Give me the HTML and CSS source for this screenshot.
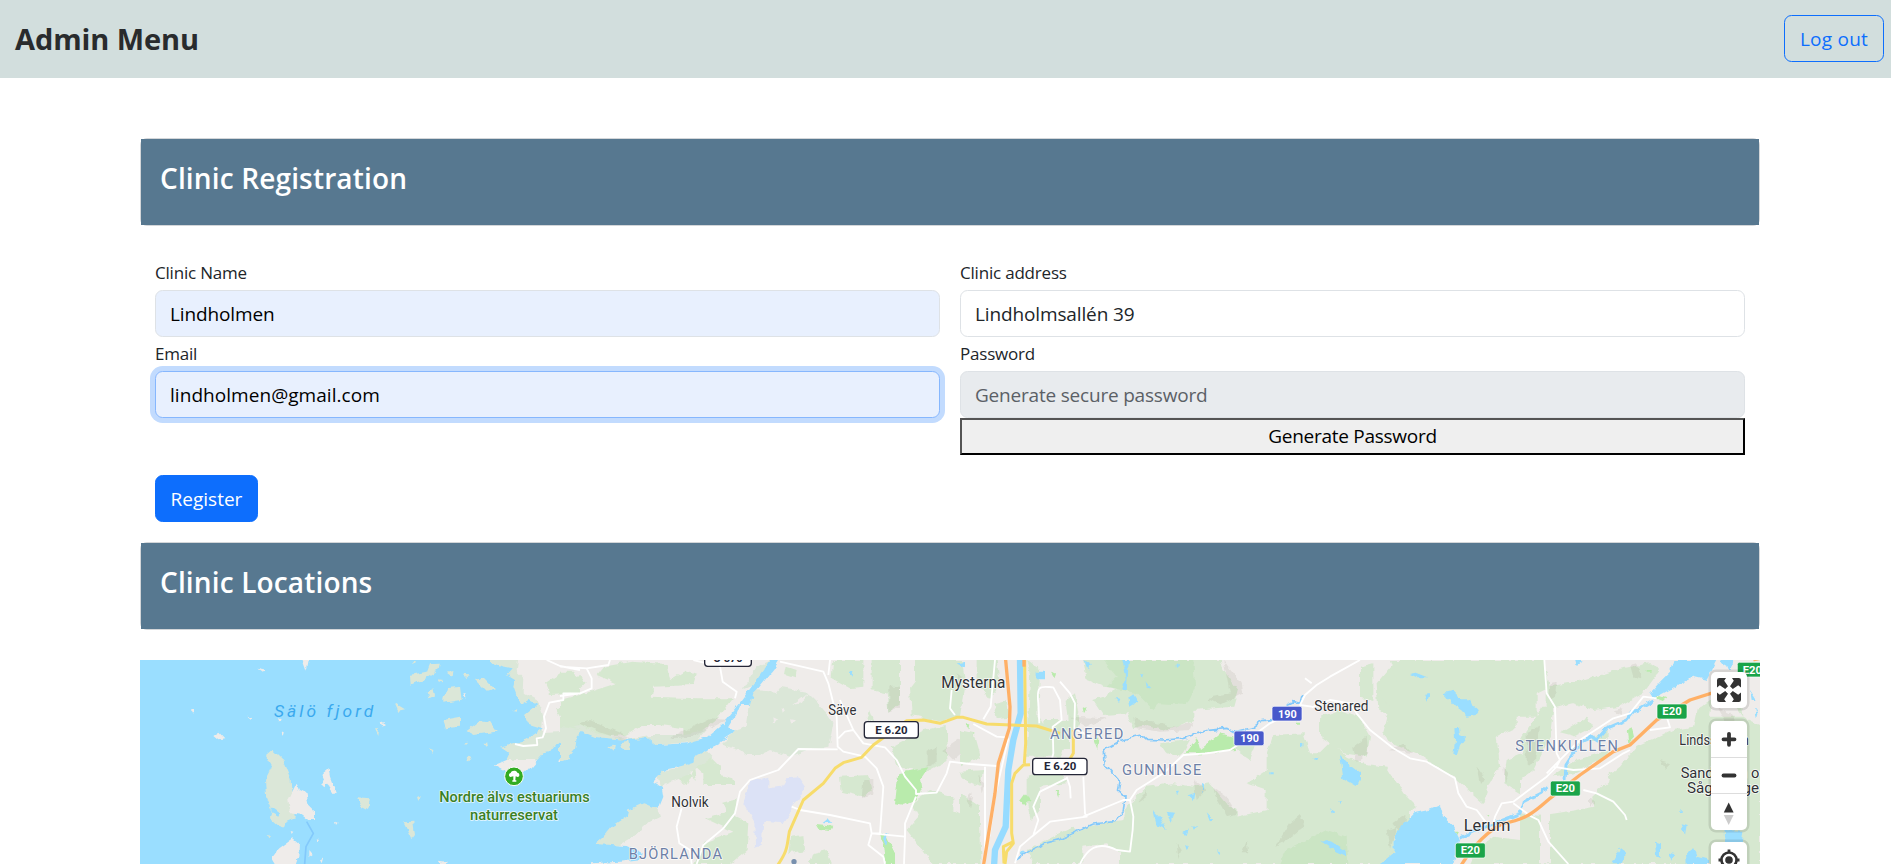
FILE: index.html
```html
<!DOCTYPE html>
<html lang="en">
<head>
<meta charset="utf-8">
<title>Admin Menu</title>
<link rel="stylesheet" href="styles.css">
</head>
<body>
<nav class="navbar">
  <h1 class="brand">Admin Menu</h1>
  <button class="btn btn-outline" type="button">Log out</button>
</nav>
<main class="content">
  <section class="card"><h2 class="card-title">Clinic Registration</h2></section>
  <form class="form">
    <div class="fields">
      <div class="field">
        <label class="label" for="name">Clinic Name</label>
        <input class="input filled name" id="name" value="Lindholmen">
      </div>
      <div class="field">
        <label class="label" for="address">Clinic address</label>
        <input class="input address" id="address" value="Lindholmsallén 39">
      </div>
      <div class="field">
        <label class="label" for="email">Email</label>
        <input class="input filled focused email" id="email" value="lindholmen@gmail.com">
      </div>
      <div class="field">
        <label class="label" for="password">Password</label>
        <input class="input disabled" id="password" placeholder="Generate secure password" disabled>
        <button class="generate" type="button">Generate Password</button>
      </div>
    </div>
    <button class="btn btn-primary" type="button">Register</button>
  </form>
  <section class="card"><h2 class="card-title locations">Clinic Locations</h2></section>
  <div class="map">
    <svg class="map-canvas" width="1620" height="204" viewBox="30 30 4860 612">
      <defs>
        <filter id="rough" filterUnits="userSpaceOnUse" x="0" y="0" width="4920" height="680" color-interpolation-filters="sRGB">
          <feTurbulence type="fractalNoise" baseFrequency="0.045" numOctaves="2" seed="4"/>
          <feDisplacementMap in="SourceGraphic" scale="17" xChannelSelector="R" yChannelSelector="G"/>
        </filter>
      </defs>
      <rect width="4920" height="680" fill="#efecea"/>
      <g filter="url(#rough)">
        <!-- Archipelago and western coast -->
        <g>
          <path class="reserve" d="M1060 20H1165L1160 60 1180 80 1178 125 1225 150 1240 200 1235 250 1300 245 1400 190V330H1080V20Z"/>
          <path class="water" d="M-30 0H1070L1085 40 1115 52 1145 58 1130 75 1155 90 1150 110 1170 165 1195 150 1222 165 1185 195 1190 220 1238 235 1180 272 1110 290 1140 310 1130 330 1095 345 1130 365 1190 365 1240 310 1262 305 1285 275 1305 280 1285 335 1300 342 1335 310 1345 255 1370 245V680H-30Z"/>
          <path class="reserve" d="M840 75 890 65 900 40 930 38 925 60 880 90 842 107ZM940 145 950 115 990 110 995 150 940 158ZM890 125 910 115 915 135 895 145ZM1035 90 1060 82 1095 118 1070 125ZM937 210 990 200 990 230 945 235ZM1010 240 1050 210 1080 215 1100 245 1030 255ZM795 160 825 178 805 182ZM735 235 747 235 745 255ZM897 295 910 300 908 312ZM1140 185 1165 178 1160 188ZM1060 278 1080 278 1070 290ZM950 65 970 60 968 78ZM995 74 1020 76 1005 84ZM925 88 940 90 930 96ZM1000 280 1015 278 1005 288ZM860 438 873 443 865 452ZM410 552 420 555 415 562ZM848 32 858 34 852 46ZM1010 320 1025 322 1015 338ZM682 442 720 445 715 478 690 465ZM820 517 850 515 855 555 845 568ZM405 315 425 297 460 330 485 390 490 470 495 505 470 515 465 530 440 522 420 505 425 480 408 440 405 390 425 350Z"/>
          <path class="land" d="M382 50 405 55 405 67ZM517 25H537L530 62ZM250 255 265 245 283 265 265 268ZM575 370 595 353 600 380 617 425 610 432 590 405 583 415 573 405 585 392ZM475 450 500 398 510 420 530 430 535 465 555 485 555 510 535 510 515 495 480 490ZM425 625 445 598 490 565 507 580 505 620 495 650H440ZM925 632 950 635 945 650ZM187 180H195V190H187ZM440 200 452 205 447 215ZM455 240 462 245 457 262ZM352 200 372 205 362 209ZM535 600 545 612 535 620ZM1000 130 1010 130 1008 150ZM550 620 560 625ZM570 630 580 622 575 640ZM482 543 490 545 485 552ZM560 565 570 568 565 574ZM615 512 623 515 618 522ZM750 215 765 225 758 230Z"/>
          <path class="water" d="M425 472 450 490 445 500 425 490Z"/>
          <path class="woods" d="M1245 100 1290 70 1310 95 1350 75V130L1260 135ZM1275 175 1350 160V210L1290 200Z"/>
        </g>
        <!-- Säve, Nolvik and the north arm of the river -->
        <g transform="translate(1290)">
          <path class="woods" d="M130 50 215 35 320 42 330 90 375 62 410 75 400 105 280 110 275 140 410 145 520 145 470 210 420 250 370 260 370 235 300 225 250 225 200 255 120 260 60 225 0 240V150L90 125 170 100 110 75ZM0 65 40 65 80 95 50 125 0 120ZM30 225 60 240 50 290 20 330 0 335V240ZM680 50 710 60 705 85 675 75ZM820 30 910 30 910 110 870 115 815 85ZM935 30 1020 30V160L985 185 980 130 935 120ZM1065 30 1205 30 1215 90 1200 200 1145 215 1055 195 1050 110 1065 90ZM1250 30 1310 30 1320 105 1290 150 1250 100ZM995 290 1090 240 1160 225 1165 330 1100 365 1010 350ZM840 380 925 375 935 420 910 440 845 425ZM1055 460 1110 420 1180 440 1180 480 1260 520 1265 642H1120L1040 540 1075 500ZM1200 365 1270 360 1260 410 1205 385ZM395 340 440 310 480 350 480 375 520 385 525 405 430 405 430 370ZM435 505 500 485 490 455 530 445 525 500 565 520 560 600 510 642H400L430 580 520 545ZM690 560 730 555 735 600 685 610ZM760 610 800 600 815 642H750ZM1225 500 1260 520 1250 560ZM405 345 390 370 410 390ZM350 385 400 365 380 405ZM920 200 930 180 945 220Z"/>
          <path class="reserve" d="M0 230 60 240 200 268 270 255 360 255 440 240 410 275 290 285 190 285 100 270 45 300 15 340H0ZM580 120 650 125 660 110 740 125 770 155 800 190 820 220 805 290 740 300 690 320 630 300 600 315 560 315 540 300 490 285 500 265 530 240 560 230 570 160ZM290 365 350 355 400 320 440 300 460 320 380 375 300 410ZM545 120 590 50 635 30 600 100ZM105 580 155 530 200 485 240 455 290 470 300 500 270 515 220 560 180 585 110 595Z"/>
          <path class="land" d="M640 205 655 212 642 220ZM665 175 675 180 668 188ZM700 165 745 130 725 160ZM690 205 705 208 693 218Z"/>
          <path class="water" d="M-30 350 18 330 45 300 50 260 65 243 110 262 200 270 260 262 290 285 380 280 440 262 490 220 545 150 590 90 640 20H665L640 60 615 90 595 115 580 130 570 165 540 165 530 190 505 230 525 245 495 265 480 280 440 300 405 320 400 335 350 352 310 360 280 395 305 410 310 440 295 478 250 460 205 480 200 500 155 530 130 560 105 582 200 588 245 610 240 628 180 635 90 640V680H-30Z"/>
          <path class="reserve" d="M145 292 165 285 160 302ZM182 280 205 275 210 300 190 300Z"/>
          <path class="airport" d="M570 395 625 380 625 415 665 410 680 385 715 382 735 410 715 450 695 470 690 490 670 520 610 515 605 585 585 590 583 515 550 460Z"/>
          <path class="park" d="M1015 370 1060 360 1105 352 1080 390 1085 420 1065 450 1030 465 1005 460ZM960 550 980 560 1005 610 1005 642H975L970 590ZM768 525 820 530 815 540 775 537ZM1212 220 1228 220 1225 235ZM1225 250 1243 250 1240 275 1228 275ZM1237 315H1245V326H1237Z"/>
          <path class="water" d="M787 520 805 505 817 518ZM973 550 982 550 980 590 973 575ZM868 65 880 60 878 80ZM1190 40 1215 35 1215 55Z"/>
          <path class="relief" d="M55 220 90 210 210 260 190 270 100 240ZM330 265 450 205 500 210 400 260ZM985 110H1020V170L985 185ZM1100 305 1130 290V335L1100 350ZM1150 300 1210 260 1215 300 1180 330ZM910 390 940 390V430L905 445ZM1255 375 1275 400 1265 430ZM1215 450 1235 430 1225 480ZM1190 70 1205 80 1200 110ZM1200 560 1220 550 1210 590Z"/>
        </g>
        <!-- Angered, Gunnilse and the hills -->
        <g transform="translate(2490)">
          <path class="woods" d="M370 30 800 30 845 80 820 170 700 180 700 210 620 240 560 225 520 235 500 190 430 195 400 150 430 140 475 115 430 110 380 90ZM100 160 140 150 150 200 110 205ZM200 30 240 60 235 200 270 260 330 250 320 150 345 130 360 220 300 320 200 320 205 210 210 80ZM0 240 40 250 60 320 0 350ZM0 430 60 470 60 642H0ZM200 380 300 355 320 400 240 410 240 480 215 510 200 440ZM1300 40 1350 30V210L1255 180 1250 100ZM1080 200 1140 180 1195 200 1230 260 1220 320 1150 310 1080 260ZM500 470 560 410 640 400 700 410 750 400 800 460 830 480 830 500 920 480 920 420 860 400 920 360 920 310 940 255 1030 250 1050 310 1080 310 1110 280 1160 320 1250 360 1280 400 1320 430 1350 470V520L1300 560 1300 642H210L380 530 490 510ZM200 600 240 580 340 530 380 580 360 642H220ZM250 210 330 210 330 300 250 300ZM790 260 900 250 870 330 840 310ZM600 280 690 270 660 320 620 310Z"/>
          <path class="woods-deep" d="M430 30H700L705 110 680 165 600 160 580 180 530 130 440 110 470 80ZM980 600 1100 540 1160 560 1165 642H960Z"/>
          <path class="land" d="M370 590 440 580 480 610 480 642H370ZM780 20H1200V30L1040 150 960 160 850 140 790 60Z"/>
          <path class="park" d="M675 310 710 265 720 300 780 250 820 260 825 300 740 310ZM180 450 195 430 212 450 195 468ZM287 420 297 420 295 440ZM400 270 415 265 412 300ZM368 170 380 175 372 190ZM270 65 285 70 280 82ZM1005 218H1020V224H1005Z"/>
          <path class="water" d="M505 140 520 130 535 155 510 170ZM487 30H507L500 120H485L500 85ZM370 30 395 45 390 65ZM540 70 550 70 545 80ZM557 95 573 115 560 110ZM467 145 482 145 477 156ZM230 65H255V88H230ZM580 480 600 500 620 540 590 525ZM620 485 645 488 635 515ZM740 490 760 510 750 515ZM670 550 687 535 680 555ZM683 433 706 425 702 450ZM722 395 730 400 728 435ZM650 425 660 425 655 435ZM1140 315 1175 350 1207 375 1190 408 1150 385ZM1080 572 1110 570 1155 600 1160 618 1130 605ZM1060 322 1072 325 1070 333ZM1020 282H1030V292H1020ZM928 367H938V373H928ZM1110 478 1125 487 1115 490ZM1135 453 1147 455 1140 462ZM675 582 687 588 680 597ZM768 600 778 605 775 612ZM180 605 195 605 185 620ZM1340 520 1380 510V642H1260L1300 610 1300 570ZM650 40 658 45 650 52ZM700 525 712 530 704 536Z"/>
          <path class="relief" d="M790 30 845 100 850 130 780 165 740 145 810 130ZM520 205 640 230 700 215 690 240 600 245 530 235ZM330 200 440 205 380 230ZM760 410 800 440 830 490 800 500 770 450ZM1250 370 1320 420 1290 470 1340 490 1330 560 1300 520 1280 430ZM990 520 1020 495 1035 530 980 570 945 590ZM530 460 560 420 560 440ZM1180 290 1220 260 1225 310 1190 340ZM700 390 740 420 710 450ZM20 450 40 440 30 475ZM650 580 665 600 655 630ZM845 610 860 570 865 610Z"/>
        </g>
        <!-- Stenkullen and Lerum -->
        <g transform="translate(3690)">
          <path class="woods" d="M90 30 550 30 570 110 530 130 530 200 470 200 470 230 410 260 420 350 390 400 370 460 280 380 200 330 170 310 90 280 70 250 90 170 50 130 110 90ZM650 95 760 60 870 40 900 60 850 130 780 170 700 180 640 160 560 180 560 110ZM600 250 680 200 700 230 640 260ZM480 270 550 170 580 170 570 260 520 360 480 390 480 430 430 400 440 330 490 310ZM1010 180 1170 60 1200 60V642H610L520 500 650 480 700 470 690 420 780 350 830 290 900 260 940 240 1000 230ZM0 340 80 350 130 430 170 470 100 520 100 600 60 642H0ZM330 642 350 600 400 560 480 570 480 490 560 500 620 642ZM690 270 740 240 740 270ZM0 50 40 40 40 150 0 140ZM575 380 650 330 750 300 720 330 640 370Z"/>
          <path class="land" d="M690 360 740 355 750 390 690 440 660 425ZM1175 20H1210V230L1150 200 1140 90ZM540 490 570 480 570 640 540 640ZM1065 100 1090 120 1150 200 1050 200Z"/>
          <path class="water" d="M160 490 205 480 240 465 250 500 280 530 300 570 280 642H60L100 620 105 550ZM250 130 280 122 300 145 330 145 340 170 360 180 350 195 320 200 300 180 285 170ZM283 232 300 230 303 255 318 262 300 285 290 318 280 310 285 270ZM150 72 170 68 205 82 170 82ZM193 135 210 132 200 155ZM645 30 665 38 650 48ZM940 30H1070L1040 90 1000 80 960 100 925 120 880 145 870 130 900 95 930 65ZM1080 20 1120 30 1115 60 1090 45ZM885 575 900 580 900 620 888 615ZM925 608 945 612 935 635ZM978 610 1000 595 1010 620 1050 630 1050 642H980ZM780 595 795 605 790 640H755ZM962 520 980 525 975 555ZM1090 540 1150 542 1145 580 1130 590 1125 610 1095 580ZM1170 120 1190 150 1175 150ZM1185 170 1195 190 1190 205ZM958 478H968V486H958Z"/>
          <path class="park" d="M800 240 815 232 822 260 805 278ZM890 135 920 145 900 155ZM287 545 300 545 295 555ZM380 492 390 492 385 500ZM860 60H875V65H860ZM395 455 403 460ZM765 128 777 130Z"/>
          <path class="relief" d="M570 100 590 95 585 140 570 150ZM500 250 540 230 525 330 500 350ZM90 300 130 280 160 310ZM80 540 110 530 90 600ZM1070 170 1110 190 1140 240 1100 220ZM810 45 830 40 845 85 820 80ZM430 350 445 370 435 400ZM690 440 705 455 690 470ZM350 350 375 385 360 405ZM760 180 790 175 785 195ZM900 330 930 340 915 355Z"/>
        </g>
      </g>
      <g class="streams">
        <path d="M530 515 550 550 528 590 524 642"/>
        <g filter="url(#rough)">
          <path d="M2660 628 2700 602 2745 580 2790 568 2850 540 2890 522 2955 515 2980 485 2985 440 2965 420 2970 395 2925 345 2923 300 2975 270 3035 255 3050 268 3100 270 3160 265 3230 242 3290 235 3310 246 3370 232 3395 212 3430 208M3470 165 3490 155 3510 160 3515 140 3525 133"/>
          <path class="creek" d="M3990 565 4030 545 4120 510 4170 490 4180 455 4230 430 4255 408M4305 390 4308 345 4330 310 4360 270 4385 260 4400 270 4430 235 4490 210 4510 185 4570 150"/>
        </g>
      </g>
      <path class="river" d="M2670 25 2672 190 2650 270 2635 360 2627 530 2595 600 2592 650"/>
      <g class="roads">
        <path d="M1250 30 1290 48 1350 60M1350 130 1300 130 1300 150 1258 158 1242 200 1248 235 1238 262 1220 265 1222 285 1180 288 1155 282M1290 50 1370 55 1385 85 1385 115 1350 130 1290 138M1370 55 1435 45 1440 30M1690 30 1770 50 1778 95 1820 125 1815 145"/>
        <path d="M1950 35 2080 65 2095 100 2120 200 2123 290 2140 305 2205 320M2095 75 2100 30M2130 150 2170 240 2200 280 2265 292 2300 330 2325 380 2358 420 2358 432 2420 428 2450 370 2460 335 2520 342 2600 348M2170 240 2145 245 2125 265M2123 298 2005 297 1945 360 1860 390 1830 425 1815 490 1780 535 1720 585 1700 642M1655 475 1640 530 1648 580 1680 600 1685 642M2205 320 2240 355 2260 410 2250 550 2225 550 2215 585 2260 620 2265 642M1985 470 2010 480 2100 495 2220 520 2225 550 2325 560 2322 642M2358 440 2325 520 2325 560M2465 120 2460 175 2475 195M2595 30 2582 170 2560 208M2530 222 2600 260 2630 262M2565 350 2565 642M2635 265 2595 440 2578 560"/>
        <path d="M2725 160C2718 100 2735 110 2770 112L2790 150 2795 210 2768 230 2770 310 2765 330M2790 95 2820 130 2835 160 2833 235 2880 260M2810 380 2820 410 2822 445M2810 385 2730 425 2710 470 2725 510 2710 555M2860 380 2865 490 2870 500 2760 515 2705 560 2670 590 2655 640M2725 160 2728 220M2860 500 2980 450 3000 450 3020 420 3100 370 3160 315 3230 310 3300 300 3385 245 3420 220 3450 205M3000 450 3010 500 3008 540 3000 605 2960 600C2900 570 2870 600 2850 642M3545 170 3510 165 3525 135 3560 105 3600 80 3690 30M3545 100 3525 85M3545 172 3600 150 3660 160 3680 190 3720 240 3790 295 3840 325 3890 335 3975 385 3985 430 4010 470 4040 480 4070 520"/>
        <path d="M4243 30 4250 130 4275 170 4280 310 4290 330 4280 350 4250 380 4150 455 4115 460 4095 500 4090 520M4360 420 4400 430 4450 455 4485 495 4490 510M4250 370 4300 320 4350 270 4450 205 4500 190 4540 140 4580 145M4150 460 4205 500 4225 510 4255 575 4315 642M4270 350 4330 360 4410 355 4480 310 4500 300M4560 240 4620 232 4610 200"/>
      </g>
      <g class="secondary">
        <path d="M1940 650C1975 600 1970 590 1978 545L2020 450 2080 400 2115 355 2140 338 2195 322 2230 285 2330 212 2380 210 2430 220 2480 202 2500 202 2570 222 2720 228 2790 250"/>
        <path d="M2684 30 2687 280 2683 340M2830 240 2830 310 2815 335M2700 344 2680 345 2655 370 2645 400 2645 550 2650 580 2630 605 2625 642M2650 575 2620 590 2622 640"/>
      </g>
      <g class="motorway">
        <path d="M2626 20 2640 170 2638 235 2605 340 2595 430 2560 650"/>
        <path d="M2682 20V50"/>
        <path d="M3985 660C4020 600 4060 550 4120 520C4190 510 4220 480 4260 445L4350 375 4450 305 4500 285 4580 210 4680 150 4790 115"/>
        <path d="M4870 30 4890 25"/>
      </g>
      <g class="labels">
        <text class="sea" x="432" y="202" textLength="298">Sälö fjord</text>
        <text class="nature" x="928" y="457" textLength="451" lengthAdjust="spacingAndGlyphs">Nordre älvs estuariums</text>
        <text class="nature" x="1020" y="510" textLength="264" lengthAdjust="spacingAndGlyphs">naturreservat</text>
        <text class="town" x="2434" y="114" textLength="192" lengthAdjust="spacingAndGlyphs">Mysterna</text>
        <text class="village" x="2095" y="196" textLength="84" lengthAdjust="spacingAndGlyphs">Säve</text>
        <text class="village" x="1624" y="470" textLength="112" lengthAdjust="spacingAndGlyphs">Nolvik</text>
        <text class="village" x="3553" y="184" textLength="162" lengthAdjust="spacingAndGlyphs">Stenared</text>
        <text class="town" x="4001" y="543" textLength="140" lengthAdjust="spacingAndGlyphs">Lerum</text>
        <text class="village" x="4648" y="284" textLength="208" lengthAdjust="spacingAndGlyphs">Lindsstugan</text>
        <text class="village" x="4652" y="384" textLength="236" lengthAdjust="spacingAndGlyphs">Sandviken o</text>
        <text class="village" x="4671" y="430" textLength="216" lengthAdjust="spacingAndGlyphs">Sågaränge</text>
        <text class="district" x="1496" y="628" textLength="280">BJÖRLANDA</text>
        <text class="district" x="2760" y="267" textLength="220">ANGERED</text>
        <text class="district" x="2976" y="376" textLength="238">GUNNILSE</text>
        <text class="district" x="4156" y="303" textLength="308">STENKULLEN</text>
      </g>
      <circle class="pin" cx="1152" cy="379" r="28"/>
      <path class="tree" d="M1141 381C1134 378 1137 369 1142 369C1144 361 1159 360 1162 368C1169 368 1171 379 1163 381L1157 379 1156 391H1159V395H1147V391H1150V379Z"/>
      <circle cx="1992" cy="635" r="8" fill="#7890ae"/>
      <g class="shield-white">
        <rect x="1724" y="0" width="140" height="49" rx="9"/><text x="1750" y="37" textLength="88" lengthAdjust="spacingAndGlyphs">O 570</text>
        <rect x="2203" y="215" width="162" height="49" rx="9"/><text x="2236" y="251" textLength="97" lengthAdjust="spacingAndGlyphs">E 6.20</text>
        <rect x="2708" y="325" width="163" height="49" rx="9"/><text x="2742" y="361" textLength="97" lengthAdjust="spacingAndGlyphs">E 6.20</text>
      </g>
      <g class="shield-blue">
        <rect x="3426" y="169" width="90" height="44" rx="6"/><text x="3444" y="203" textLength="56" lengthAdjust="spacingAndGlyphs">190</text>
        <rect x="3312" y="243" width="90" height="44" rx="6"/><text x="3331" y="277" textLength="56" lengthAdjust="spacingAndGlyphs">190</text>
      </g>
      <g class="shield-green">
        <rect x="4822" y="37" width="90" height="44" rx="6"/><text x="4838" y="71" textLength="58" lengthAdjust="spacingAndGlyphs">E20</text>
        <rect x="4581" y="162" width="90" height="45" rx="6"/><text x="4597" y="196" textLength="58" lengthAdjust="spacingAndGlyphs">E20</text>
        <rect x="4261" y="393" width="90" height="45" rx="6"/><text x="4277" y="427" textLength="58" lengthAdjust="spacingAndGlyphs">E20</text>
        <rect x="3976" y="579" width="90" height="45" rx="6"/><text x="3992" y="613" textLength="58" lengthAdjust="spacingAndGlyphs">E20</text>
      </g>
    </svg>
    <div class="controls">
      <div class="control">
        <button class="control-btn" type="button" aria-label="Fullscreen"><svg width="36" height="36" viewBox="0 0 36 36"><g id="corner"><path d="M8.200 6H15L13.200 8.800 17 14.200 14.200 17 8.800 13.200 6 15.500V8.200Q6 6 8.200 6Z" fill="#333"/></g><use href="#corner" transform="matrix(-1 0 0 1 36 0)"/><use href="#corner" transform="matrix(1 0 0 -1 0 36)"/><use href="#corner" transform="rotate(180 18 18)"/></svg></button>
      </div>
      <div class="control">
        <button class="control-btn" type="button" aria-label="Zoom in"><svg width="36" height="36" viewBox="0 0 36 36"><path d="M12.500 18.300H23.500M18 12.800V23.800" stroke="#333" stroke-width="3.800" stroke-linecap="round"/></svg></button>
        <button class="control-btn" type="button" aria-label="Zoom out"><svg width="36" height="36" viewBox="0 0 36 36"><path d="M12.500 17.500H23.500" stroke="#333" stroke-width="3.800" stroke-linecap="round"/></svg></button>
        <button class="control-btn" type="button" aria-label="Reset north"><svg width="36" height="36" viewBox="0 0 36 36"><path d="M12.800 18.500 17.700 8.500 22.600 18.500Z" fill="#333"/><path d="M12.800 21 17.700 31 22.600 21Z" fill="#ccc"/></svg></button>
      </div>
      <div class="control">
        <button class="control-btn" type="button" aria-label="Find my location"><svg width="36" height="36" viewBox="0 0 36 36"><circle cx="18" cy="18" r="7.500" fill="none" stroke="#333" stroke-width="2.600"/><circle cx="18" cy="18" r="3.800" fill="#333"/><path d="M18 7.500V11M18 25V28.500M7.500 18H11M25 18H28.500" stroke="#333" stroke-width="2.800"/></svg></button>
      </div>
    </div>
  </div>
</main>
</body>
</html>
```

FILE: styles.css
```css
* { box-sizing: border-box; }
body { margin: 0; height: 864px; overflow: hidden; background: #fff; color: #212529; font-family: "Segoe UI", "Open Sans", "Noto Sans", sans-serif; font-size: 19px; }
button, input { font: inherit; }

.navbar { display: flex; align-items: flex-start; justify-content: space-between; height: 78px; padding: 15px 7px 0 15px; background: #d2dedd; }
.brand { margin: 6px 0 0; font-size: 29px; line-height: 36px; font-weight: 700; letter-spacing: -.1px; color: #292b2d; }
.btn { height: 47px; padding: 0 15px; border: 1px solid #0d6efd; border-radius: 7.500px; line-height: 47px; }
.btn-outline { width: 100px; padding: 0; background: transparent; color: #0d6efd; letter-spacing: .25px; }
.btn-primary { display: block; width: 103px; padding: 0; background: #0d6efd; color: #fff; }

.content { width: 1620px; margin: 60px 0 0 140px; }
.card { height: 88px; border: 1px solid #d3d6d9; border-radius: 7px; }
.card-title { height: 86px; margin: 0; padding: 20px 19px; background: #577890; color: #fff; font-size: 28px; line-height: 38px; font-weight: 600; letter-spacing: .15px; }

.form { height: 316px; padding: 31px 15px 0; }
.fields { display: grid; grid-template-columns: 785px 785px; grid-template-rows: 81px 117px; column-gap: 20px; height: 218px; }
.field { display: flex; flex-direction: column; }
.label { flex: none; height: 33px; line-height: 32px; font-size: 17px; font-weight: 400; letter-spacing: -.2px; }
.input { display: block; width: 785px; height: 47px; flex: none; margin: 0; padding: 0 14px; border: 1px solid #dee2e6; border-radius: 7.500px; background: #fff; color: #212529; outline: 0; letter-spacing: -.13px; }
.filled { background: #e8f0fe; color: #000; }
.focused { border-color: #86b7fe; box-shadow: 0 0 0 5px #c2dbfe; letter-spacing: .05px; }
.disabled { background: #e8ebee; letter-spacing: -.2px; }
.disabled::placeholder { color: #5b6066; opacity: 1; }
.generate { height: 37px; flex: none; padding: 0; border: 2px outset #000; background: #efefef; color: #000; line-height: 31px; letter-spacing: -.27px; }

.map { position: relative; width: 1620px; height: 204px; margin-top: 30px; overflow: hidden; }
.map-canvas { display: block; }
.land { fill: #efecea; }
.water { fill: #9adeff; }
.reserve { fill: #dbe7d8; }
.woods { fill: #d6e8d0; }
.woods-deep { fill: #cbe5c4; }
.park { fill: #b9ebac; }
.airport { fill: #dce2f6; }
.relief { fill: #796f58; opacity: .1; }
.streams { fill: none; stroke: #83c9fb; stroke-width: 5; stroke-linejoin: round; }
.streams .creek { stroke: #94d9ff; stroke-width: 9; }
.river { fill: none; stroke: #96dbff; stroke-width: 19; }
.roads { fill: none; stroke: #fff; stroke-width: 5.500; stroke-linejoin: round; }
.secondary { fill: none; stroke: #f7dc6b; stroke-width: 9; stroke-linejoin: round; }
.motorway { fill: none; stroke: #ffb066; stroke-width: 10; stroke-linejoin: round; }
.labels { font-family: "DIN Pro", Roboto, sans-serif; stroke: #fff; stroke-opacity: .8; stroke-width: 5; paint-order: stroke; stroke-linejoin: round; }
.sea { font-size: 52px; font-style: italic; fill: #3ba9ee; stroke: none; }
.nature { font-size: 45px; font-weight: 500; fill: #398026; }
.town { font-size: 50px; fill: #303236; }
.village { font-size: 44px; fill: #303236; }
.district { font-size: 44px; fill: #6d80a6; }
.pin { fill: #33ac22; stroke: #fff; stroke-width: 3; }
.tree { fill: #fff; }
.shield-white, .shield-blue, .shield-green { font-family: Roboto, sans-serif; font-size: 33px; font-weight: 700; }
.shield-white rect { fill: #fff; stroke: #242637; stroke-width: 4; }
.shield-white text { fill: #242637; }
.shield-blue rect { fill: #4859cb; stroke: #fff; stroke-width: 2; }
.shield-green rect { fill: #1aa449; stroke: #fff; stroke-width: 2; }
.shield-blue text, .shield-green text { fill: #fff; }

.controls { position: absolute; top: 12px; right: 13px; display: flex; flex-direction: column; gap: 12.500px; }
.control { overflow: hidden; border-radius: 5px; background: #fff; box-shadow: 0 0 0 2.500px rgba(0, 0, 0, .1); }
.control-btn { display: block; width: 36px; height: 36px; margin: 0; padding: 0; border: 0; background: transparent; }
.control-btn + .control-btn { height: 36.500px; border-top: 1px solid #ddd; }
.control-btn svg { display: block; }
```
